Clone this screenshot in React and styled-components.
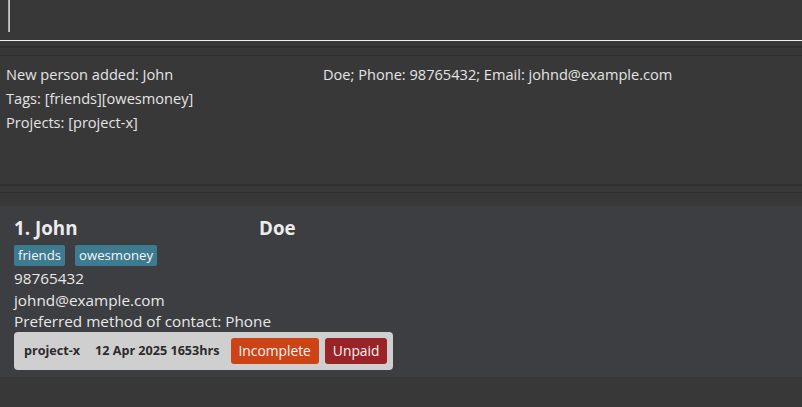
import React from "react";
import styled, { createGlobalStyle } from "styled-components";

const GlobalStyle = createGlobalStyle`
body{
  margin:0;
  background:#383838;
  font-family:"Open Sans","Noto Sans",sans-serif;
}
`;

const Page = styled.div`
display:flex;
flex-direction:column;
height:407px;
background:#383838;
overflow:hidden;
`;

// Command box
const CommandBox = styled.div`
height:40px;
border-bottom:1px solid #f0f0f0;
padding-left:8px;
box-sizing:content-box;
`;
const Caret = styled.div`
width:2px;
height:32px;
background:linear-gradient(to right,#9a9a9a,#d8d8d8);
`;

const Splitter = styled.div`
height:${(p) => p.$h}px;
box-sizing:border-box;
border-top:2px solid #2f2f2f;
border-bottom:1px solid #2f2f2f;
margin-top:${(p) => p.$top}px;
`;

// Result display
const ResultBox = styled.div`
height:128px;
padding:6px 6px 0;
box-sizing:border-box;
`;
const ResultLine = styled.div`
color:#e4e4e4;
font-size:14.6px;
line-height:24px;
white-space:pre;
tab-size:317px;
`;

// Person list
const ListArea = styled.div`
padding-top:13px;
`;
const Card = styled.div`
background:#3c3e41;
height:171px;
padding:8px 14px 0;
box-sizing:border-box;
`;
const Name = styled.div`
color:#ececec;
font-size:18.8px;
font-weight:700;
line-height:28px;
white-space:pre;
tab-size:245px;
`;
const TagRow = styled.div`
display:flex;
gap:10px;
margin:3px 0 2px;
`;
const Tag = styled.span`
background:#3e7b91;
color:#f6f6f6;
font-size:13.2px;
line-height:21px;
padding:0 4px;
border-radius:2px;
`;
const Field = styled.div`
color:#e8e8e8;
font-size:15.3px;
line-height:21.5px;
`;
const ProjectBar = styled.div`
display:flex;
width:fit-content;
align-items:center;
gap:6px;
background:#cfcfcf;
border-radius:4px;
padding:6px 6px 6px 10px;
margin-top:-1px;
`;
const ProjectText = styled.span`
color:#2b2b2b;
font-size:12.6px;
font-weight:700;
margin-right:${(p) => p.$gap}px;
`;
const Status = styled.span`
background:${(p) => p.$bg};
color:#f5f5f5;
font-size:13.8px;
line-height:26px;
padding:0 8px;
border-radius:3px;
`;

export default function App() {
  return (
    <Page>
      <GlobalStyle />
      <CommandBox>
        <Caret />
      </CommandBox>
      <Splitter $h={10} $top={5} />
      <ResultBox>
        <ResultLine>{"New person added: John\tDoe; Phone: 98765432; Email: johnd@example.com"}</ResultLine>
        <ResultLine>Tags: [friends][owesmoney]</ResultLine>
        <ResultLine>Projects: [project-x]</ResultLine>
      </ResultBox>
      <Splitter $h={9} $top={0} />
      <ListArea>
        <Card>
          <Name>{"1. John\tDoe"}</Name>
          <TagRow>
            <Tag>friends</Tag>
            <Tag>owesmoney</Tag>
          </TagRow>
          <Field>98765432</Field>
          <Field>johnd@example.com</Field>
          <Field>Preferred method of contact: Phone</Field>
          <ProjectBar>
            <ProjectText $gap={9}>project-x</ProjectText>
            <ProjectText $gap={5}>12 Apr 2025 1653hrs</ProjectText>
            <Status $bg="#cc4416">Incomplete</Status>
            <Status $bg="#9a2328">Unpaid</Status>
          </ProjectBar>
        </Card>
      </ListArea>
    </Page>
  );
}
